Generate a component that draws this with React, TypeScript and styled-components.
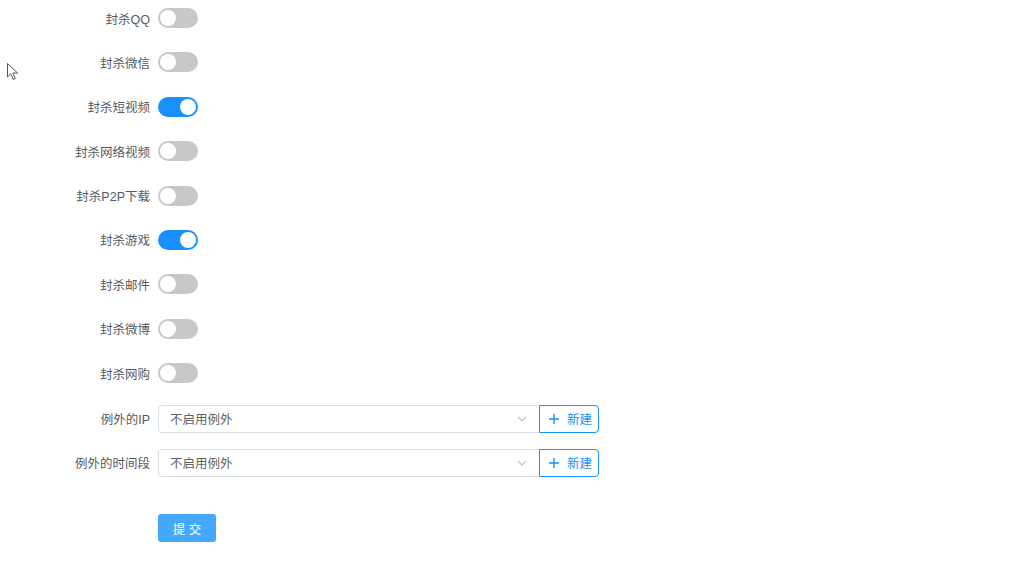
import React, { useState } from 'react';
import styled, { createGlobalStyle } from 'styled-components';

const GlobalStyle = createGlobalStyle`
    html, body {
        margin: 0;
        padding: 0;
        background: #fff;
    }
    body {
        font-family: "Liberation Sans", "Noto Sans CJK SC", sans-serif;
        color: #606266;
    }
`

type switchRow = {
    label: string,
    on: boolean,
}

const rows: switchRow[] = [
    {label: '封杀QQ', on: false},
    {label: '封杀微信', on: false},
    {label: '封杀短视频', on: true},
    {label: '封杀网络视频', on: false},
    {label: '封杀P2P下载', on: false},
    {label: '封杀游戏', on: true},
    {label: '封杀邮件', on: false},
    {label: '封杀微博', on: false},
    {label: '封杀网购', on: false},
]

const Switch = ({on, onToggle}: { on: boolean, onToggle: () => void }) => (
    <SwitchTrack $on={on} onClick={onToggle}>
        <SwitchKnob $on={on}/>
    </SwitchTrack>
)

const SelectWithButton = () => (
    <Control>
        <Select>
            <SelectText>不启用例外</SelectText>
            <svg width="10" height="6" viewBox="0 0 10 6">
                <path d="M1 1 L5 5 L9 1" fill="none" stroke="#c0c4cc" strokeWidth="1.1"/>
            </svg>
        </Select>
        <AddButton>
            <svg width="10" height="10" viewBox="0 0 10 10">
                <path d="M5 0 V10 M0 5 H10" stroke="#1890ff" strokeWidth="1.4"/>
            </svg>
            新建
        </AddButton>
    </Control>
)

export default function App() {
    const [state, setState] = useState(rows.map(r => r.on));

    const toggle = (i: number) => setState(s => s.map((v, j) => j === i ? !v : v));

    return (
        <Page>
            <GlobalStyle/>
            <Cursor width="12" height="18" viewBox="0 0 12 18">
                <path d="M0.5 0.5 V14 L3.8 10.8 L6.2 16.5 L8.3 15.6 L6 10 H10.6 Z" fill="#fff" stroke="#555" strokeWidth="1"/>
            </Cursor>
            <Form>
                {rows.map((r, i) => (
                    <FormItem key={r.label}>
                        <Label>{r.label}</Label>
                        <Switch on={state[i]} onToggle={() => toggle(i)}/>
                    </FormItem>
                ))}
                <SelectItem>
                    <Label>例外的IP</Label>
                    <SelectWithButton/>
                </SelectItem>
                <FormItem>
                    <Label>例外的时间段</Label>
                    <SelectWithButton/>
                </FormItem>
                <SubmitRow>
                    <Label/>
                    <SubmitButton>提 交</SubmitButton>
                </SubmitRow>
            </Form>
        </Page>
    );
}

const Page = styled.div`
    position: relative;
    width: 1024px;
    height: 576px;
    overflow: hidden;
`

const Cursor = styled.svg`
    position: absolute;
    left: 7px;
    top: 63px;
`

const Form = styled.div`
    display: flex;
    flex-direction: column;
    padding-top: 4px;
`

const FormItem = styled.div`
    display: flex;
    align-items: center;
    height: 28px;
    margin-bottom: 16.4px;
`

const SelectItem = styled(FormItem)`
    margin-top: 1px;
`

const SubmitRow = styled(FormItem)`
    margin-top: 21px;
`

const Label = styled.label`
    width: 150px;
    padding-right: 8px;
    box-sizing: content-box;
    text-align: right;
    font-size: 12.5px;
    color: #555a61;
    white-space: nowrap;
`

const SwitchTrack = styled.div<{ $on: boolean }>`
    position: relative;
    width: 40px;
    height: 20px;
    border-radius: 10px;
    background: ${p => p.$on ? '#1890ff' : '#c8c8c8'};
    cursor: pointer;
`

const SwitchKnob = styled.span<{ $on: boolean }>`
    position: absolute;
    top: 2px;
    left: ${p => p.$on ? '22px' : '2px'};
    width: 16px;
    height: 16px;
    border-radius: 50%;
    background: #fff;
`

const Control = styled.div`
    display: flex;
    height: 28px;
`

const Select = styled.div`
    display: flex;
    align-items: center;
    justify-content: space-between;
    width: 381px;
    box-sizing: border-box;
    padding: 0 11px 0 11px;
    border: 1px solid #dcdfe6;
    border-radius: 4px 0 0 4px;
    border-right: none;

    svg {
        margin-right: 1px;
    }
`

const SelectText = styled.span`
    font-size: 12.5px;
    color: #606266;
`

const AddButton = styled.button`
    display: flex;
    align-items: center;
    gap: 8px;
    width: 60px;
    height: 28px;
    box-sizing: border-box;
    padding: 0 0 0 9px;
    border: 1px solid #1890ff;
    border-radius: 0 4px 4px 0;
    background: #fff;
    color: #1890ff;
    font-family: inherit;
    font-size: 12.5px;
    cursor: pointer;
`

const SubmitButton = styled.button`
    width: 58px;
    height: 28px;
    border: none;
    border-radius: 3px;
    background: #45a8ff;
    color: #fff;
    font-family: inherit;
    font-size: 12.5px;
    cursor: pointer;
`
